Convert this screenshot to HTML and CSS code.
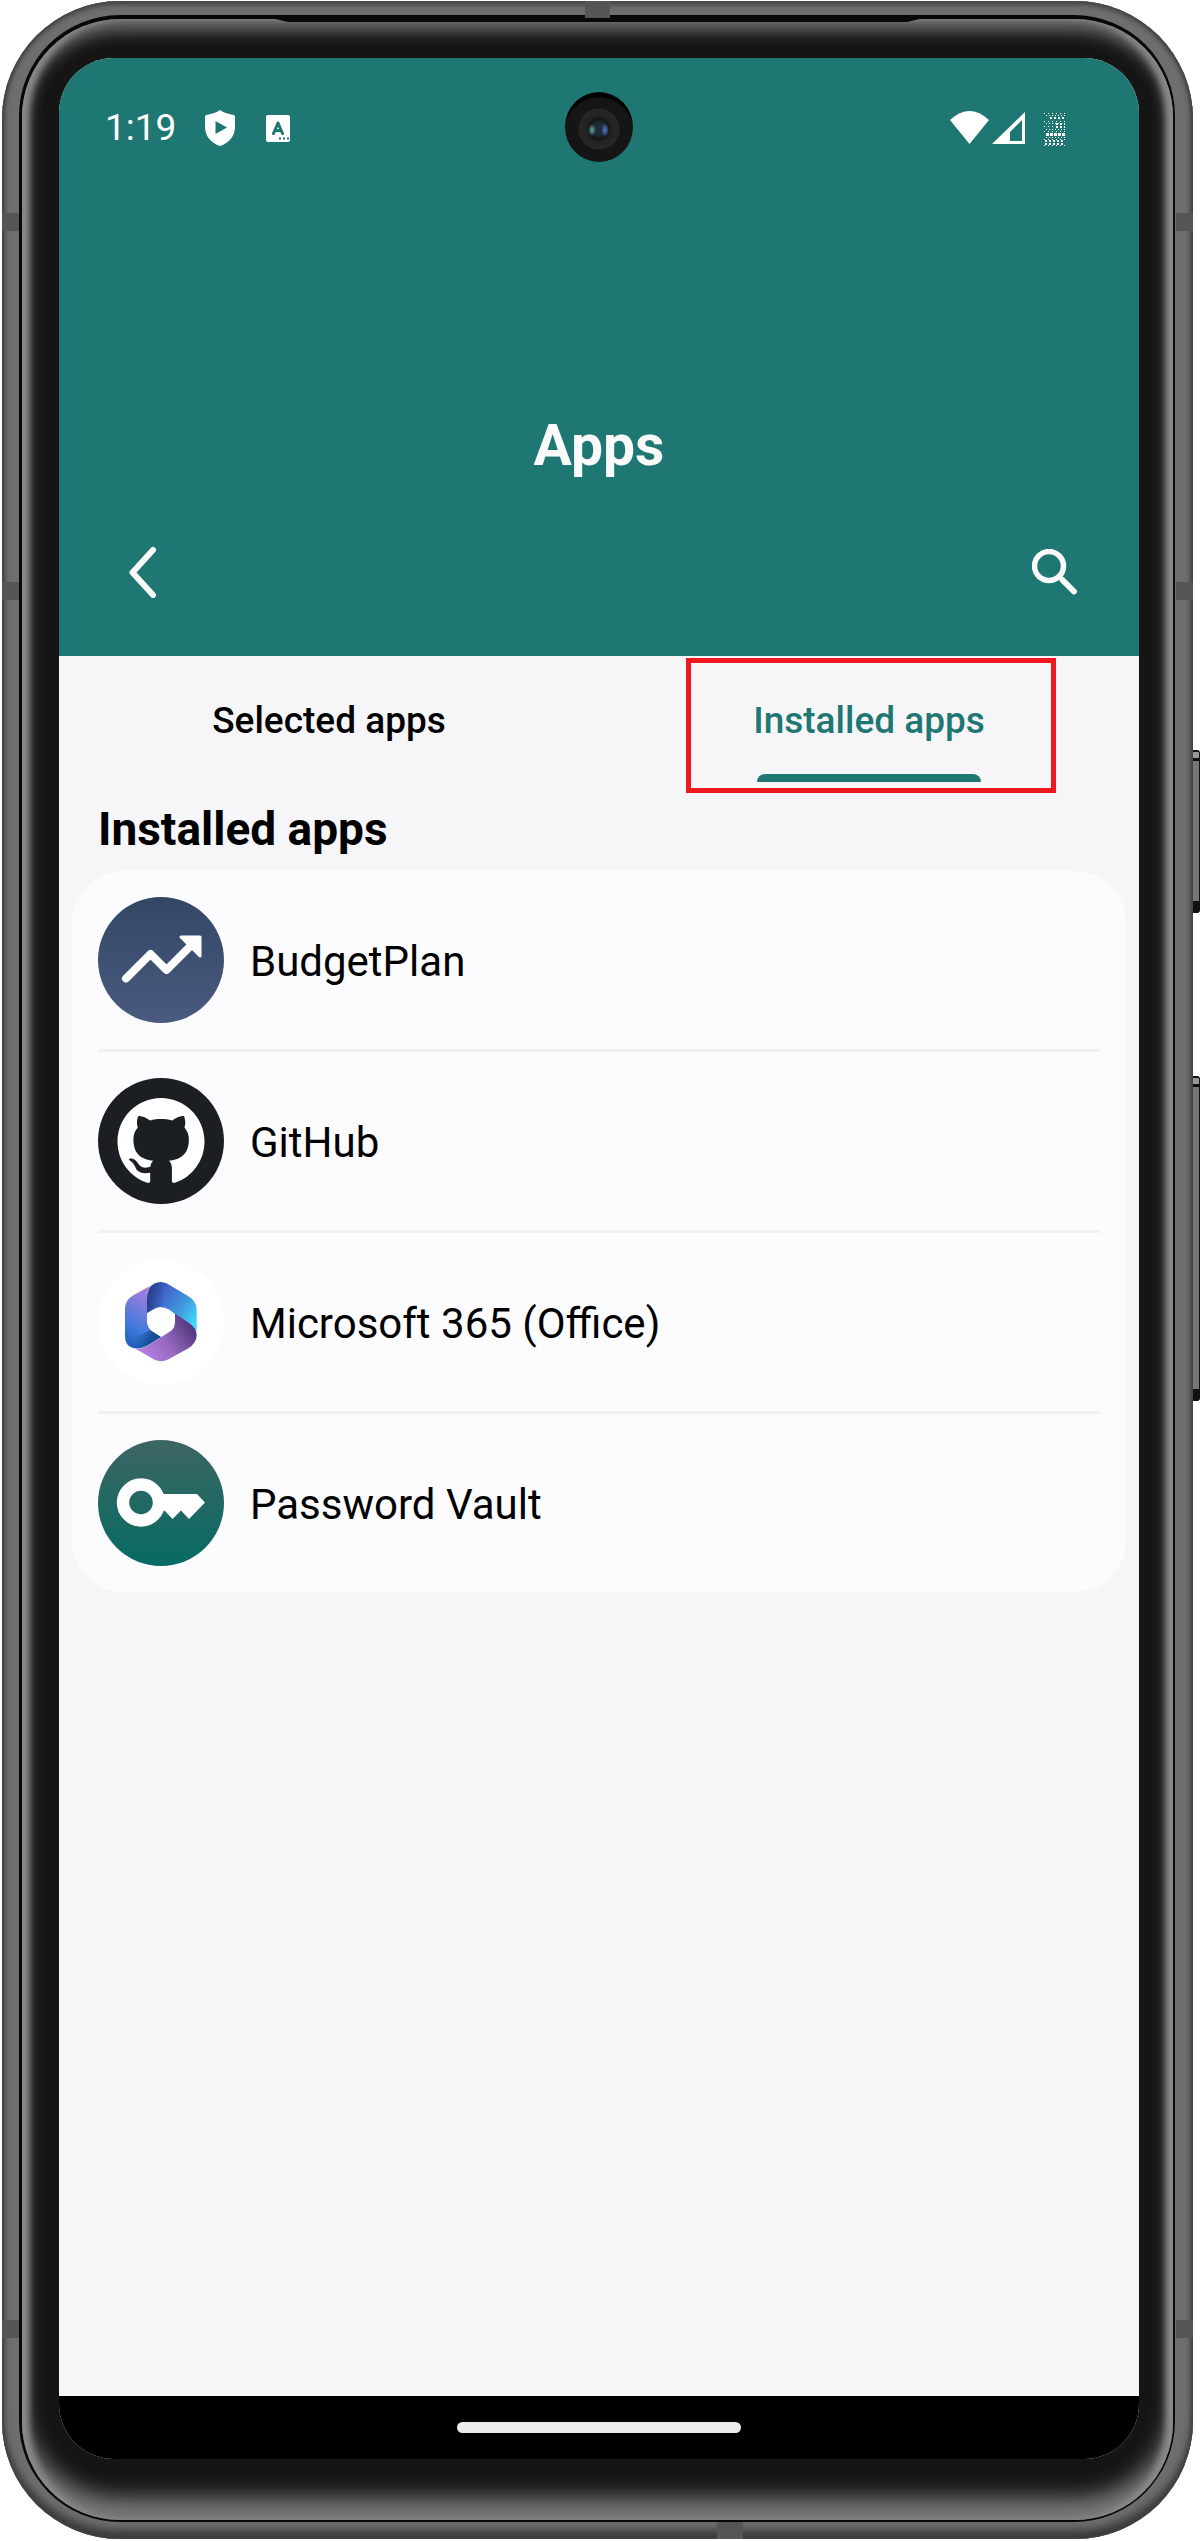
FILE: index.html
```html
<!DOCTYPE html>
<html lang="en">
<head>
<meta charset="utf-8">
<meta name="viewport" content="width=device-width, initial-scale=1">
<title>Apps</title>
<link rel="stylesheet" href="styles.css">
</head>
<body>
<div class="phone">
  <span class="side-button power"></span>
  <span class="side-button volume"></span>
  <span class="seam side upper"></span>
  <span class="seam side middle"></span>
  <span class="seam side lower"></span>
  <span class="seam top"></span>
  <span class="seam bottom"></span>
  <div class="rim">
    <div class="bezel">
      <div class="screen">
        <header class="header">
          <div class="status">
            <span class="time">1:19</span>
            <svg class="shield" width="30" height="36" viewBox="0 0 30 36" aria-hidden="true"><path fill="#fff" fill-rule="evenodd" d="M15 0c4 3 9 4 14 5 1 1 1 2 1 3v9c0 9-6 16-15 19C6 33 0 26 0 17V8c0-1 0-2 1-3 5-1 10-2 14-5zM10.500 11v13l11.500-6.500z"/></svg>
            <svg class="lang" width="24" height="27" viewBox="0 0 24 27" aria-hidden="true"><rect width="24" height="27" rx="2" fill="#fff"/><path d="M7.500 18.500 12 8l4.500 10.500M9 15.500h6" fill="none" stroke="#1e7772" stroke-width="3" stroke-linecap="round" stroke-linejoin="round"/><path d="M13 22.500h2v2h-2zM17 22.500h2v2h-2zM21 22.500h2v2h-2z" fill="#1e7772"/></svg>
            <svg class="signals" width="115" height="35" viewBox="0 0 115 35" aria-hidden="true">
              <path d="M0 9Q19.500-9 39 9L19.500 33z" fill="#fff"/>
              <path fill-rule="evenodd" d="M75 1v32H42zM72 9 60 21v9h12z" fill="#fff"/>
              <path d="M94 2.500h21M94 10.500h21M94 15.500h21M94 20.500h21M94 28.500h21M94 34.500h21" stroke="#fff" stroke-width="1" stroke-dasharray="1 3"/>
              <path d="M96 18.500h19M96 26.500h19M96 4.500h19M96 12.500h19" stroke="#fff" stroke-width="1" stroke-dasharray="1 2"/>
              <path d="M100 7h15M106 13h9M95 30h20M95 33h20M106 16h9" stroke="#fff" stroke-width="2" stroke-dasharray="2 2"/>
              <path d="M96 23.500h19" stroke="#fff" stroke-width="3" stroke-dasharray="3 1"/>
            </svg>
          </div>
          <span class="camera"></span>
          <h1 class="title">Apps</h1>
          <div class="toolbar">
            <button class="icon-button" aria-label="Back"><svg width="32" height="52" viewBox="0 0 32 52"><path d="M27 4 6.500 26.500 27 49" fill="none" stroke="#fafafa" stroke-width="6" stroke-linecap="round" stroke-linejoin="round"/></svg></button>
            <button class="icon-button" aria-label="Search"><svg width="46" height="46" viewBox="0 0 46 46"><circle cx="17" cy="17" r="14.500" fill="none" stroke="#fafafa" stroke-width="5.500"/><path d="M30.500 31 42 42.500" stroke="#fafafa" stroke-width="6" stroke-linecap="round"/></svg></button>
          </div>
        </header>
        <div class="tabs" role="tablist">
          <button class="tab" role="tab" aria-selected="false">Selected apps</button>
          <button class="tab active" role="tab" aria-selected="true">Installed apps<span class="highlight"></span></button>
        </div>
        <main class="content">
          <h2 class="heading">Installed apps</h2>
          <ul class="apps">
            <li class="app"><div class="app-row">
              <svg class="app-icon" viewBox="0 0 126 126" aria-hidden="true"><defs><linearGradient id="budget" x2="0" y2="1"><stop stop-color="#334764"/><stop offset="1" stop-color="#4a5a80"/></linearGradient></defs><circle cx="63" cy="63" r="63" fill="url(#budget)"/><path d="M28 81.500 52.500 57l16 16L93 48.500" fill="none" stroke="#fff" stroke-width="8" stroke-linecap="round" stroke-linejoin="round"/><path d="M83 40h19v19z" fill="#fff" stroke="#fff" stroke-width="3" stroke-linejoin="round"/></svg>
              <span class="app-name">BudgetPlan</span></div></li>
            <li class="app"><div class="app-row">
              <svg class="app-icon" viewBox="0 0 126 126" aria-hidden="true"><circle cx="63" cy="63" r="63" fill="#1b1f24"/><path transform="translate(19.500 20) scale(5.440)" fill="#fff" d="M8 0C3.580 0 0 3.580 0 8c0 3.540 2.290 6.530 5.470 7.590.4.070.55-.17.55-.38 0-.19-.01-.82-.01-1.490-2.010.37-2.530-.49-2.690-.94-.09-.23-.48-.94-.82-1.130-.28-.15-.68-.52-.01-.53.63-.01 1.080.58 1.230.82.72 1.210 1.870.87 2.330.66.070-.52.28-.87.51-1.070-1.780-.2-3.640-.89-3.640-3.950 0-.87.310-1.590.820-2.150-.08-.2-.36-1.020.080-2.120 0 0 .67-.21 2.200.82.640-.18 1.320-.27 2-.27s1.360.09 2 .27c1.530-1.040 2.200-.82 2.200-.82.44 1.100.16 1.920.08 2.120.51.560.82 1.270.82 2.150 0 3.070-1.870 3.750-3.650 3.950.29.250.54.730.54 1.480 0 1.070-.01 1.930-.01 2.200 0 .21.150.46.550.38A8.010 8.010 0 0 0 16 8c0-4.420-3.580-8-8-8z"/></svg>
              <span class="app-name">GitHub</span></div></li>
            <li class="app"><div class="app-row">
              <svg class="app-icon" viewBox="0 0 126 126" aria-hidden="true"><defs>
                <linearGradient id="m-left" x1=".7" y1="0" x2=".3" y2="1"><stop stop-color="#b57be0"/><stop offset=".45" stop-color="#6c7ddc"/><stop offset=".75" stop-color="#3c78dc"/><stop offset="1" stop-color="#2463c0"/></linearGradient>
                <linearGradient id="m-fold" x1="0" y1="0" x2="1" y2=".2"><stop offset=".3" stop-color="#124f94" stop-opacity="0"/><stop offset=".8" stop-color="#124f94"/></linearGradient>
                <linearGradient id="m-top" x1="0" y1=".1" x2="1" y2=".8"><stop stop-color="#2d4a9c"/><stop offset=".3" stop-color="#4168cd"/><stop offset=".65" stop-color="#3f97dc"/><stop offset="1" stop-color="#41d8fa"/></linearGradient>
                <linearGradient id="m-shade" x2="1" y2="0"><stop stop-color="#243b82" stop-opacity=".8"/><stop offset=".35" stop-color="#243b82" stop-opacity="0"/></linearGradient>
                <linearGradient id="m-bottom" x1="0" y1=".8" x2="1" y2=".3"><stop stop-color="#c084ee"/><stop offset=".5" stop-color="#9468bd"/><stop offset="1" stop-color="#4d3276"/></linearGradient></defs>
                <circle cx="63" cy="63" r="63" fill="#fff"/>
                <path d="M52 27 35 36.500Q27 41 27 50v27q0 12 12 12.500 4 0 9-3L63 78 55 73q-6-4-6-11V35z" fill="url(#m-left)"/>
                <path d="M52 71l11 7-14 9q-6 3.500-12 2-6-1.500-8.500-6z" fill="url(#m-fold)"/>
                <path d="M49 54V41q0-13 7.500-16.500Q63 21.500 69 24.500L90 37q8.700 5 8.700 14v21L77 55l-6-4.500q-9-5-16 0z" fill="url(#m-top)"/>
                <path d="M49 54V41q0-13 7.500-16.500Q63 21.500 69 24.500L90 37q8.700 5 8.700 14v21L77 55l-6-4.500q-9-5-16 0z" fill="url(#m-shade)"/>
                <path d="M77 54.500 91 64q7.700 5.500 7.700 12 0 8-8.700 13.500L70 100.500q-7 3.500-14 0L37 89.500q6 1.500 13-3l22-14q5-3 5-10z" fill="url(#m-bottom)"/></svg>
              <span class="app-name">Microsoft 365 (Office)</span></div></li>
            <li class="app"><div class="app-row">
              <svg class="app-icon" viewBox="0 0 126 126" aria-hidden="true"><defs><linearGradient id="vault" x2="0" y2="1"><stop stop-color="#3d6563"/><stop offset="1" stop-color="#066b63"/></linearGradient></defs><circle cx="63" cy="63" r="63" fill="url(#vault)"/><circle cx="43" cy="62.500" r="18" fill="none" stroke="#fff" stroke-width="12.400"/><path d="M63 54h36l8 8.500-16 16.500-8-8.500-8.500 8.500-8-8.500H63z" fill="#fff"/></svg>
              <span class="app-name">Password Vault</span></div></li>
          </ul>
        </main>
        <nav class="nav"><span class="pill"></span></nav>
      </div>
    </div>
  </div>
</div>
</body>
</html>
```

FILE: styles.css
```css
* { box-sizing: border-box; }

body {
  margin: 0;
  padding: 1px 7px 2px 2px;
  background: #fff;
  color: #000;
  font-family: Roboto, sans-serif;
}

button {
  border: 0;
  padding: 0;
  background: none;
  font: inherit;
  color: inherit;
}

/* Device frame */
.phone {
  position: relative;
  display: flex;
  min-height: calc(100vh - 3px);
  padding: 14px 18px 17px 17px;
  border-radius: 118px;
  background: #6e6e6e;
  box-shadow: inset 2px 0 3px #444, inset -2px 0 3px #444, inset 0 4px 5px #484c4a, inset 0 -9px 8px #3a3a3a;
}

.rim {
  flex: 1;
  display: flex;
  padding: 4px 2px 2px 3px;
  border-radius: 101px;
  background: #080808;
}

.bezel {
  position: relative;
  flex: 1;
  display: flex;
  padding: 39px 34px 61px 37px;
  border-radius: 98px;
  background: #151515;
  box-shadow:
    inset 8px 0 6px -1px #8a8a8a,
    inset -8px 0 6px -1px #8a8a8a,
    inset 0 12px 16px #6c6c6c,
    inset 0 -22px 22px #7c7c7c;
}

.bezel::before {
  content: "";
  position: absolute;
  top: 0;
  left: 22%;
  right: 22%;
  height: 3px;
  background: #080808;
  clip-path: polygon(0 0, 100% 0, 98% 100%, 2% 100%);
}

.seam { position: absolute; background: #555; }
.seam.side { left: 0; width: 17px; height: 18px; box-shadow: 1174px 0 #555; }
.seam.upper { top: 212px; }
.seam.middle { top: 581px; }
.seam.lower { bottom: 201px; }
.seam.top { top: 0; left: 583px; width: 25px; height: 17px; }
.seam.bottom { bottom: 0; left: 715px; width: 26px; height: 17px; }

.side-button {
  position: absolute;
  left: 100%;
  width: 7px;
  border: solid #111;
  border-width: 2px 1px 12px 0;
  border-radius: 0 3px 3px 0;
  background: linear-gradient(#999 6px, #111 6px, #111 9px, #777 9px);
}
.side-button.power { top: 749px; height: 163px; }
.side-button.volume { top: 1075px; height: 325px; }

/* Screen */
.screen {
  position: relative;
  flex: 1;
  display: flex;
  flex-direction: column;
  overflow: hidden;
  border-radius: 55px;
  background: #f6f6f8;
}

.header { background: #1e7772; color: #fafafa; }

.status {
  display: flex;
  align-items: center;
  height: 140px;
  padding: 0 74px 0 46px;
  color: #fff;
}
.time { font-size: 37px; line-height: 44px; }
.shield { margin-left: 29px; }
.lang { margin-left: 31px; }
.signals { margin-left: auto; }

.camera {
  position: absolute;
  top: 34px;
  left: 50%;
  width: 68px;
  height: 70px;
  margin-left: -34px;
  border-radius: 50%;
  background:
    radial-gradient(ellipse 4px 6px at 27px 38px, #5fb0ab, transparent),
    radial-gradient(ellipse 4px 7px at 40px 38px, #5a78d2, transparent),
    radial-gradient(circle at 34px 37px, #1d2a38 6px, #151515 10px, #222 13px, #262626 20px, #151515 21px);
  box-shadow: inset 0 6px 1px -1px #000;
}

.title {
  margin: 216px 0 0;
  font-size: 57px;
  line-height: 64px;
  font-weight: 700;
  text-align: center;
}

.toolbar {
  display: flex;
  align-items: center;
  justify-content: space-between;
  margin-top: 10px;
  height: 168px;
  padding: 0 61px 0 67px;
}
.icon-button svg { display: block; }

.tabs { display: grid; grid-template-columns: 1fr 1fr; height: 126px; }

.tab {
  position: relative;
  padding-top: 3px;
  font-size: 37px;
  line-height: 44px;
  font-weight: 500;
}
.tab.active { color: #1e7772; }
.tab.active::after {
  content: "";
  position: absolute;
  bottom: 0;
  left: calc(50% - 112px);
  width: 224px;
  height: 8px;
  border-radius: 8px 8px 0 0;
  background: #1e7772;
}

.highlight {
  position: absolute;
  z-index: 1;
  top: 2px;
  right: 83px;
  bottom: -11px;
  left: 87px;
  border: 5px solid #f01820;
}

.content { flex: 1; padding: 19px 13px 0; }

.heading {
  margin: 0 26px 14px;
  font-size: 46px;
  line-height: 56px;
  font-weight: 700;
}

.apps {
  margin: 0;
  padding: 0 26px;
  border-radius: 52px;
  background: #fcfcfe;
  list-style: none;
}

.app-row {
  display: flex;
  align-items: center;
  gap: 26px;
  padding: 26px 0;
  font-size: 42px;
  line-height: 50px;
}
.app + .app { border-top: 3px solid #f1f1f3; }
.app-icon { flex: none; width: 126px; height: 126px; }
.app-name { padding-top: 3px; }

.nav {
  display: flex;
  align-items: center;
  justify-content: center;
  height: 63px;
  background: #000;
}
.pill { width: 284px; height: 11px; border-radius: 6px; background: #ebebeb; }
```
